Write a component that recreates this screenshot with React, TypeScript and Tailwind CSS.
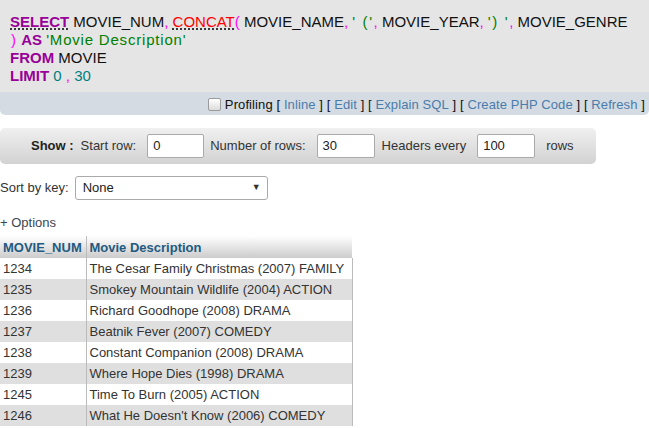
const rows = [
  { num: "1234", desc: "The Cesar Family Christmas (2007) FAMILY" },
  { num: "1235", desc: "Smokey Mountain Wildlife (2004) ACTION" },
  { num: "1236", desc: "Richard Goodhope (2008) DRAMA" },
  { num: "1237", desc: "Beatnik Fever (2007) COMEDY" },
  { num: "1238", desc: "Constant Companion (2008) DRAMA" },
  { num: "1239", desc: "Where Hope Dies (1998) DRAMA" },
  { num: "1245", desc: "Time To Burn (2005) ACTION" },
  { num: "1246", desc: "What He Doesn't Know (2006) COMEDY" },
];

const kw = "font-bold text-[#990099]";
const fn = "text-[#ff0000]";
const pu = "text-[#ff00ff]";
const st = "text-[#008000]";
const nu = "text-[#008080]";

function Link({ children }: { children: React.ReactNode }) {
  return <span className="text-[#4a7cac]">{children}</span>;
}

export default function App() {
  return (
    <main className="min-h-screen bg-white font-['Liberation_Sans',Arial,sans-serif] text-[13px] text-[#333]">
      {/* sql box */}
      <div className="bg-[#e5e5e5] pl-[10px] pt-[13px] pb-[7px] text-[15px] leading-[18px] text-[#111] whitespace-nowrap">
        <div>
          <span className={`${kw} underline decoration-dotted decoration-black underline-offset-2`}>SELECT</span> MOVIE_NUM
          <span className={pu}>,</span> <span className={`${fn} underline decoration-dotted decoration-black underline-offset-2`}>CONCAT</span>
          <span className={pu}>(</span> MOVIE_NAME<span className={pu}>,</span>{" "}
          <span className={`${st} tracking-[1.6px]`}>' ('</span>
          <span className={pu}>,</span> MOVIE_YEAR<span className={pu}>,</span>{" "}
          <span className={`${st} tracking-[1.6px]`}>') '</span>
          <span className={pu}>,</span> MOVIE_GENRE
        </div>
        <div>
          <span className={`${pu} mr-[1px] ml-[1px]`}>)</span> <span className={kw}>AS</span>{" "}
          <span className={`${st} tracking-[0.8px]`}>'Movie Description'</span>
        </div>
        <div>
          <span className={kw}>FROM</span> MOVIE
        </div>
        <div>
          <span className={kw}>LIMIT</span> <span className={nu}>0</span> <span className={pu}>,</span>{" "}
          <span className={nu}>30</span>
        </div>
      </div>

      {/* links bar */}
      <div className="flex h-[23px] items-center justify-end rounded-b-[5px] bg-[#d4dbe2] pt-[2px] pr-[4px] tracking-[0.1px] text-[#111] whitespace-pre">
        <span className="mr-[4px] h-[13px] w-[13px] rounded-[2px] border border-[#9a9a9a] bg-gradient-to-b from-white to-[#dcdcdc]" />
        <span>Profiling [ </span>
        <Link>Inline</Link>
        <span> ] [ </span>
        <Link>Edit</Link>
        <span> ] [ </span>
        <Link>Explain SQL</Link>
        <span> ] [ </span>
        <Link>Create PHP Code</Link>
        <span> ] [ </span>
        <Link>Refresh</Link>
        <span> ]</span>
      </div>

      {/* show bar */}
      <div className="mt-[13px] flex h-[36px] w-[596px] items-center rounded-[5px] bg-gradient-to-b from-[#f0f0f0] to-[#d2d2d2] pl-[31px] whitespace-nowrap">
        <span className="font-bold text-[#222]">Show :</span>
        <span className="ml-[7px]">Start row:</span>
        <div className="ml-[11px] flex h-[24px] w-[57px] items-center rounded-[2px] border border-[#aaa] bg-white pl-[5px] text-[#222]">0</div>
        <span className="ml-[6px]">Number of rows:</span>
        <div className="ml-[11px] flex h-[24px] w-[58px] items-center rounded-[2px] border border-[#aaa] bg-white pl-[5px] text-[#222]">30</div>
        <span className="ml-[7px]">Headers every</span>
        <div className="ml-[11px] flex h-[24px] w-[58px] items-center rounded-[2px] border border-[#aaa] bg-white pl-[5px] text-[#222]">100</div>
        <span className="ml-[11px]">rows</span>
      </div>

      {/* sort */}
      <div className="mt-[12px] flex items-center whitespace-nowrap">
        <span>Sort by key:</span>
        <div className="ml-[6px] flex h-[24px] w-[193px] items-center justify-between rounded-[3px] border border-[#aaa] bg-white pl-[7px] pr-[6px] text-[#222]">
          <span>None</span>
          <span className="text-[9px] text-[#333]">▼</span>
        </div>
      </div>

      <div className="mt-[15px] leading-[16px] text-[#3a4654]">+ Options</div>

      {/* results */}
      <table className="mt-[5px] border-collapse whitespace-nowrap">
        <thead>
          <tr className="h-[22px] bg-gradient-to-b from-white to-[#cccccc]">
            <th className="w-[86px] border-r border-[#bbb] pl-[3px] pt-[1px] text-left font-bold text-[#235a81]">MOVIE_NUM</th>
            <th className="w-[266px] pl-[3px] pt-[1px] text-left font-bold text-[#235a81]">Movie Description</th>
          </tr>
        </thead>
        <tbody>
          {rows.map((r, i) => (
            <tr key={r.num} className={i % 2 === 0 ? "h-[21px] bg-white" : "h-[21px] bg-[#dfdfdf]"}>
              <td className="border-r border-[#bbb] pl-[3px]">{r.num}</td>
              <td className="border-r border-[#bbb] pl-[3px]">{r.desc}</td>
            </tr>
          ))}
        </tbody>
      </table>
    </main>
  );
}
